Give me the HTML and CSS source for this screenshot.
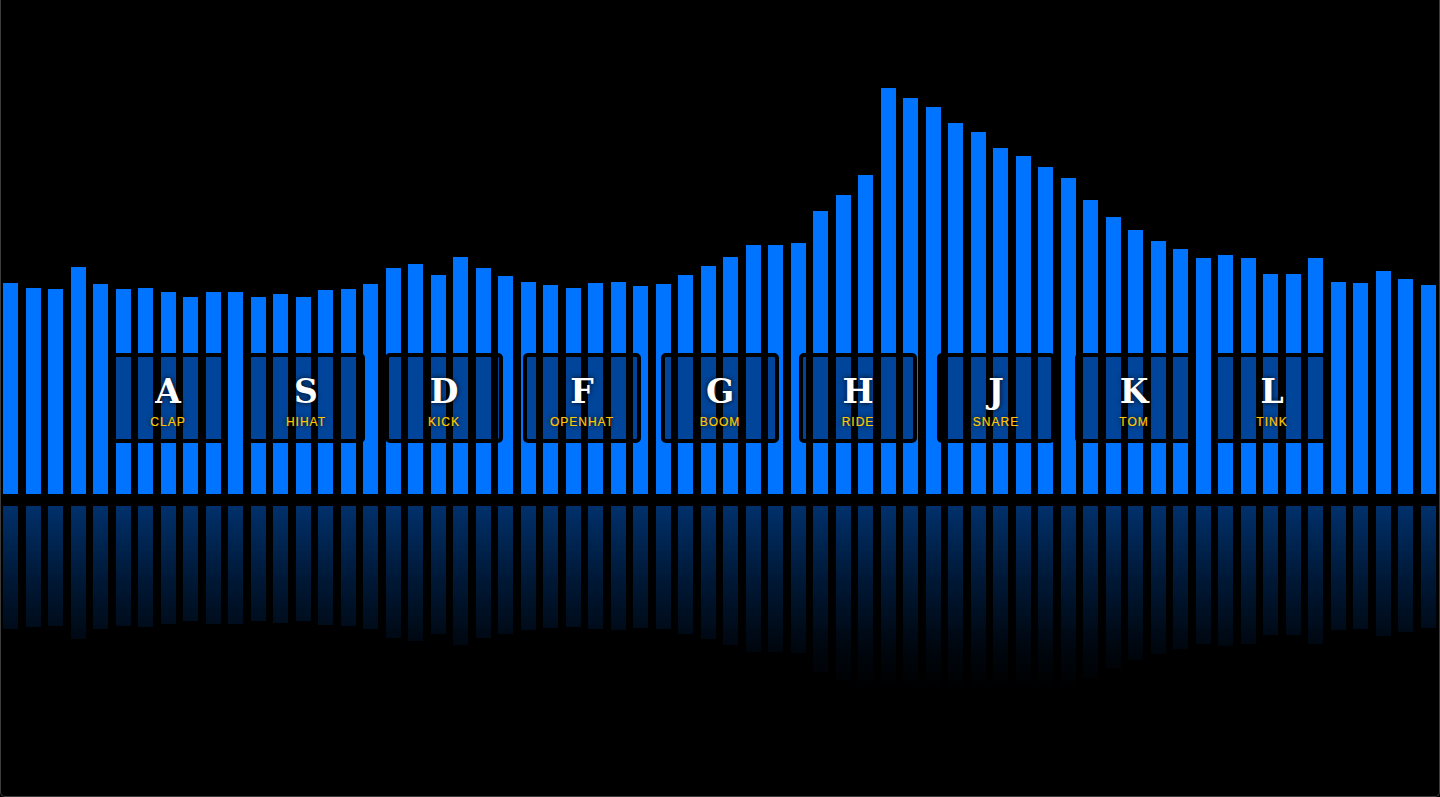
FILE: index.html
```html
<!DOCTYPE html>
<html lang="en">
<head>
<meta charset="utf-8">
<title>Drum Kit</title>
<link rel="stylesheet" href="styles.css">
</head>
<body>
<main class="app">
  <div class="viz">
    <div class="bars">
      <div class="bar" style="--h:211"></div><div class="bar" style="--h:206"></div><div class="bar" style="--h:205"></div><div class="bar" style="--h:227"></div>
      <div class="bar" style="--h:210"></div><div class="bar" style="--h:205"></div><div class="bar" style="--h:206"></div><div class="bar" style="--h:202"></div>
      <div class="bar" style="--h:197"></div><div class="bar" style="--h:202"></div><div class="bar" style="--h:202"></div><div class="bar" style="--h:197"></div>
      <div class="bar" style="--h:200"></div><div class="bar" style="--h:197"></div><div class="bar" style="--h:204"></div><div class="bar" style="--h:205"></div>
      <div class="bar" style="--h:210"></div><div class="bar" style="--h:226"></div><div class="bar" style="--h:230"></div><div class="bar" style="--h:219"></div>
      <div class="bar" style="--h:237"></div><div class="bar" style="--h:226"></div><div class="bar" style="--h:218"></div><div class="bar" style="--h:212"></div>
      <div class="bar" style="--h:209"></div><div class="bar" style="--h:206"></div><div class="bar" style="--h:211"></div><div class="bar" style="--h:212"></div>
      <div class="bar" style="--h:208"></div><div class="bar" style="--h:210"></div><div class="bar" style="--h:219"></div><div class="bar" style="--h:228"></div>
      <div class="bar" style="--h:237"></div><div class="bar" style="--h:249"></div><div class="bar" style="--h:249"></div><div class="bar" style="--h:251"></div>
      <div class="bar" style="--h:283"></div><div class="bar" style="--h:299"></div><div class="bar" style="--h:319"></div><div class="bar" style="--h:406"></div>
      <div class="bar" style="--h:396"></div><div class="bar" style="--h:387"></div><div class="bar" style="--h:371"></div><div class="bar" style="--h:362"></div>
      <div class="bar" style="--h:346"></div><div class="bar" style="--h:338"></div><div class="bar" style="--h:327"></div><div class="bar" style="--h:316"></div>
      <div class="bar" style="--h:294"></div><div class="bar" style="--h:277"></div><div class="bar" style="--h:264"></div><div class="bar" style="--h:253"></div>
      <div class="bar" style="--h:245"></div><div class="bar" style="--h:236"></div><div class="bar" style="--h:239"></div><div class="bar" style="--h:236"></div>
      <div class="bar" style="--h:220"></div><div class="bar" style="--h:220"></div><div class="bar" style="--h:236"></div><div class="bar" style="--h:212"></div>
      <div class="bar" style="--h:211"></div><div class="bar" style="--h:223"></div><div class="bar" style="--h:215"></div><div class="bar" style="--h:209"></div>
    </div>
    <div class="bars reflection">
      <div class="bar" style="--h:211"></div><div class="bar" style="--h:206"></div><div class="bar" style="--h:205"></div><div class="bar" style="--h:227"></div>
      <div class="bar" style="--h:210"></div><div class="bar" style="--h:205"></div><div class="bar" style="--h:206"></div><div class="bar" style="--h:202"></div>
      <div class="bar" style="--h:197"></div><div class="bar" style="--h:202"></div><div class="bar" style="--h:202"></div><div class="bar" style="--h:197"></div>
      <div class="bar" style="--h:200"></div><div class="bar" style="--h:197"></div><div class="bar" style="--h:204"></div><div class="bar" style="--h:205"></div>
      <div class="bar" style="--h:210"></div><div class="bar" style="--h:226"></div><div class="bar" style="--h:230"></div><div class="bar" style="--h:219"></div>
      <div class="bar" style="--h:237"></div><div class="bar" style="--h:226"></div><div class="bar" style="--h:218"></div><div class="bar" style="--h:212"></div>
      <div class="bar" style="--h:209"></div><div class="bar" style="--h:206"></div><div class="bar" style="--h:211"></div><div class="bar" style="--h:212"></div>
      <div class="bar" style="--h:208"></div><div class="bar" style="--h:210"></div><div class="bar" style="--h:219"></div><div class="bar" style="--h:228"></div>
      <div class="bar" style="--h:237"></div><div class="bar" style="--h:249"></div><div class="bar" style="--h:249"></div><div class="bar" style="--h:251"></div>
      <div class="bar" style="--h:283"></div><div class="bar" style="--h:299"></div><div class="bar" style="--h:319"></div><div class="bar" style="--h:406"></div>
      <div class="bar" style="--h:396"></div><div class="bar" style="--h:387"></div><div class="bar" style="--h:371"></div><div class="bar" style="--h:362"></div>
      <div class="bar" style="--h:346"></div><div class="bar" style="--h:338"></div><div class="bar" style="--h:327"></div><div class="bar" style="--h:316"></div>
      <div class="bar" style="--h:294"></div><div class="bar" style="--h:277"></div><div class="bar" style="--h:264"></div><div class="bar" style="--h:253"></div>
      <div class="bar" style="--h:245"></div><div class="bar" style="--h:236"></div><div class="bar" style="--h:239"></div><div class="bar" style="--h:236"></div>
      <div class="bar" style="--h:220"></div><div class="bar" style="--h:220"></div><div class="bar" style="--h:236"></div><div class="bar" style="--h:212"></div>
      <div class="bar" style="--h:211"></div><div class="bar" style="--h:223"></div><div class="bar" style="--h:215"></div><div class="bar" style="--h:209"></div>
    </div>
  </div>
  <div class="keys">
    <div class="key"><kbd>A</kbd><span class="sound">clap</span></div>
    <div class="key"><kbd>S</kbd><span class="sound">hihat</span></div>
    <div class="key"><kbd>D</kbd><span class="sound">kick</span></div>
    <div class="key"><kbd>F</kbd><span class="sound">openhat</span></div>
    <div class="key"><kbd>G</kbd><span class="sound">boom</span></div>
    <div class="key"><kbd>H</kbd><span class="sound">ride</span></div>
    <div class="key"><kbd>J</kbd><span class="sound">snare</span></div>
    <div class="key"><kbd>K</kbd><span class="sound">tom</span></div>
    <div class="key"><kbd>L</kbd><span class="sound">tink</span></div>
  </div>
</main>
</body>
</html>
```
FILE: styles.css
```css
* { box-sizing: border-box; }

html, body {
  margin: 0;
  padding: 0;
  background: #000;
  height: 100%;
  overflow: hidden;
}

body {
  font-family: "Liberation Sans", Arial, sans-serif;
}

.app {
  display: grid;
  height: 100vh;
  border-left: 1px solid #3c3c3c;
  border-right: 1px solid #3c3c3c;
  border-bottom: 1px solid #3c3c3c;
  border-bottom-right-radius: 5px;
  border-bottom-left-radius: 5px;
  overflow: hidden;
}

.viz,
.keys {
  grid-area: 1 / 1;
}

.viz {
  display: flex;
  flex-direction: column;
}

.bars {
  display: flex;
  align-items: flex-end;
  gap: 7.5px;
  padding-left: 2px;
  height: 494px;
  flex: none;
}

.bar {
  flex: none;
  width: 15px;
  height: calc(var(--h) * 1px);
  background: #0073ff;
}

.reflection {
  align-items: flex-start;
  margin-top: 12px;
  height: 260px;
  -webkit-mask-image: linear-gradient(to bottom, rgba(0,0,0,0.42) 0, rgba(0,0,0,0.22) 70px, rgba(0,0,0,0.06) 140px, rgba(0,0,0,0) 185px);
  mask-image: linear-gradient(to bottom, rgba(0,0,0,0.42) 0, rgba(0,0,0,0.22) 70px, rgba(0,0,0,0.06) 140px, rgba(0,0,0,0) 185px);
}

.reflection .bar {
  height: calc(var(--h) * 0.585px);
}

.keys {
  display: flex;
  align-items: center;
  justify-content: center;
  position: relative;
}

.key {
  width: 118px;
  margin: 10px;
  padding: 10px 5px;
  border: 4px solid #000;
  border-radius: 5px;
  background: rgba(0, 0, 0, 0.4);
  color: #fff;
  text-align: center;
  text-shadow: 0 0 5px #000;
}

.key kbd {
  display: block;
  font-family: "DejaVu Serif", "Liberation Serif", serif;
  font-weight: 700;
  font-size: 33px;
  line-height: 46px;
  padding-top: 2px;
}

.sound {
  display: block;
  font-size: 12px;
  line-height: 14px;
  letter-spacing: 1px;
  text-transform: uppercase;
  color: #ffc600;
  -webkit-text-stroke: 0.2px #ffc600;
}
```
